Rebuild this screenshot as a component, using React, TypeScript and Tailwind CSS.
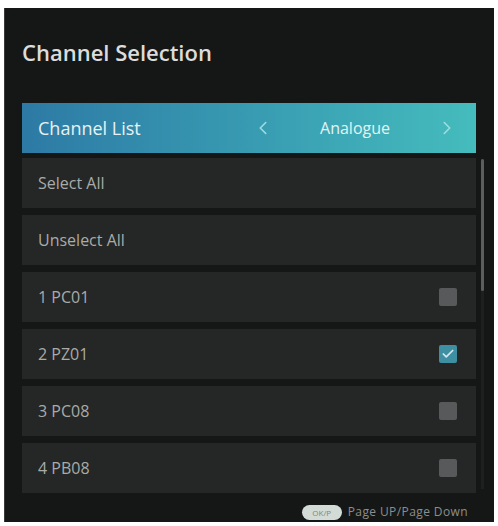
import { ChevronLeft, ChevronRight, Check } from "lucide-react";

const channels = [
  { name: "1 PC01", checked: false },
  { name: "2 PZ01", checked: true },
  { name: "3 PC08", checked: false },
  { name: "4 PB08", checked: false },
];

const Row = ({ label, checked }: { label: string; checked?: boolean }) => (
  <div className="h-[50px] bg-[#242725] flex items-center justify-between pl-[16px] pr-[19px]">
    <span className="text-[16px] text-[#a9abaa]">{label}</span>
    {checked !== undefined && (
      <div
        className={`w-[18px] h-[18px] rounded-[2px] flex items-center justify-center ${
          checked ? "bg-[#3f8fa3]" : "bg-[#58595a]"
        }`}
      >
        {checked && <Check className="w-[14px] h-[14px] text-[#d5e6ea]" strokeWidth={3} />}
      </div>
    )}
  </div>
);

const App = () => {
  return (
    <div className="w-[498px] h-[526px] bg-white pt-[8px] pl-[4px]" style={{ fontFamily: "'Open Sans', 'Noto Sans', sans-serif" }}>
      <div className="w-[490px] h-[514px] bg-[#151716] border-l border-[#3a3a3a] flex flex-col pl-[17px]">
        <h1 className="pt-[29px] text-[22px] leading-[30px] font-semibold text-[#dcdcdc]">Channel Selection</h1>

        <div className="mt-[36px] flex gap-[5px]">
          <div className="w-[454px] flex flex-col">
            <div className="h-[50px] mb-[5px] bg-gradient-to-r from-[#2d7aa5] to-[#45bcbd] flex items-center pl-[16px] pr-[18px]">
              <span className="text-[18px] text-[#e6f2f4]">Channel List</span>
              <div className="ml-auto flex items-center w-[206px] justify-between text-[#9ddde0]">
                <ChevronLeft className="w-[22px] h-[22px]" strokeWidth={1.75} />
                <span className="text-[16px] font-medium text-[#e2f4f4]">Analogue</span>
                <ChevronRight className="w-[22px] h-[22px]" strokeWidth={1.75} />
              </div>
            </div>
            <div className="flex flex-col gap-[7px]">
              <Row label="Select All" />
              <Row label="Unselect All" />
              {channels.map((c) => (
                <Row key={c.name} label={c.name} checked={c.checked} />
              ))}
            </div>
          </div>
          <div className="mt-[56px] h-[330px] w-[3px] bg-[#1e201f] relative">
            <div className="absolute top-0 left-0 w-[3px] h-[132px] bg-[#5c5e5d] rounded-full" />
          </div>
        </div>

        <div className="mt-[10px] flex items-center justify-end pr-[26px] gap-[6px]">
          <span className="h-[15px] w-[40px] rounded-full bg-[#d3dbd6] text-[8px] leading-[15px] text-center text-[#7d8883]">OK/P</span>
          <span className="text-[12px] tracking-[0.4px] text-[#8c8e8d]">Page UP/Page Down</span>
        </div>
      </div>
    </div>
  );
};

export default App;
